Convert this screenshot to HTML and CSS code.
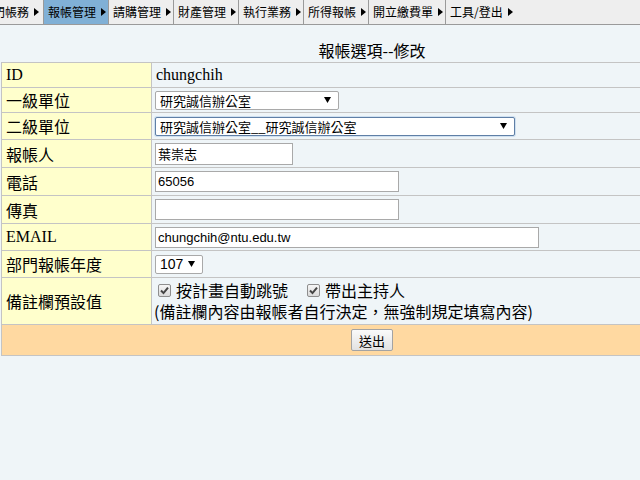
FILE: index.html
```html
<!DOCTYPE html>
<html lang="zh-Hant">
<head>
<meta charset="utf-8">
<title>報帳選項--修改</title>
<link rel="stylesheet" href="styles.css">
</head>
<body>
<nav class="menu">
  <div class="menu-item first">部門帳務<span class="tri"></span></div>
  <div class="menu-item active">報帳管理<span class="tri"></span></div>
  <div class="menu-item">請購管理<span class="tri"></span></div>
  <div class="menu-item">財產管理<span class="tri"></span></div>
  <div class="menu-item">執行業務<span class="tri"></span></div>
  <div class="menu-item">所得報帳<span class="tri"></span></div>
  <div class="menu-item">開立繳費單<span class="tri"></span></div>
  <div class="menu-item last">工具/登出<span class="tri"></span></div>
</nav>
<main class="page">
  <div class="title">報帳選項--修改</div>
  <table class="form">
    <tr class="h25"><th>ID</th><td class="plain">chungchih</td></tr>
    <tr class="h25"><th>一級單位</th><td><select class="sel sel-1"><option>研究誠信辦公室</option></select></td></tr>
    <tr class="h27"><th>二級單位</th><td><select class="sel sel-2"><option>研究誠信辦公室__研究誠信辦公室</option></select></td></tr>
    <tr class="h28"><th>報帳人</th><td><input class="txt w-name" value="葉崇志"></td></tr>
    <tr class="h28"><th>電話</th><td><input class="txt w-mid" value="65056"></td></tr>
    <tr class="h28"><th>傳真</th><td><input class="txt w-mid" value=""></td></tr>
    <tr class="h27"><th>EMAIL</th><td><input class="txt w-long" value="chungchih@ntu.edu.tw"></td></tr>
    <tr class="h27"><th>部門報帳年度</th><td><select class="sel sel-year"><option>107</option></select></td></tr>
    <tr class="h47"><th>備註欄預設值</th><td class="notes">
      <div class="checks">
        <label class="chk"><span class="box"><svg viewBox="0 0 13 13" width="13" height="13"><path d="M3 6.5l2.5 2.6L10 3.6" fill="none" stroke="#444" stroke-width="2"/></svg></span>按計畫自動跳號</label>
        <label class="chk"><span class="box"><svg viewBox="0 0 13 13" width="13" height="13"><path d="M3 6.5l2.5 2.6L10 3.6" fill="none" stroke="#444" stroke-width="2"/></svg></span>帶出主持人</label>
      </div>
      <div class="hint">(備註欄內容由報帳者自行決定，無強制規定填寫內容)</div>
    </td></tr>
    <tr class="h31 submit-row"><td colspan="2"><button class="btn">送出</button></td></tr>
  </table>
</main>
</body>
</html>
```

FILE: styles.css
```css
html, body {
  margin: 0;
  padding: 0;
  overflow: hidden;
  background: #eff5f8;
  color: #000;
  font-family: "Liberation Serif", "Noto Sans CJK TC", serif;
}

.menu {
  display: flex;
  height: 24px;
  background: #eeeeee;
  border-bottom: 1px solid #9a9a9a;
  font-family: "Noto Sans CJK TC", sans-serif;
  font-size: 12px;
  line-height: 24px;
  white-space: nowrap;
}

.menu-item {
  display: flex;
  align-items: center;
  padding: 0 2px 0 4px;
  border-right: 1px solid #9a9a9a;
  flex: none;
}

.menu-item.first {
  margin-left: -23px;
  padding-right: 4px;
}

.menu-item.active {
  background: #80b0d6;
}

.menu-item.last {
  border-right: none;
}

.tri {
  display: inline-block;
  width: 0;
  height: 0;
  margin-left: 5px;
  border-left: 5px solid #000;
  border-top: 4px solid transparent;
  border-bottom: 4px solid transparent;
}

.page {
  width: 742px;
  margin-left: 1px;
}

.title {
  text-align: center;
  font-family: "Noto Sans CJK TC", sans-serif;
  font-size: 16px;
  line-height: 20px;
  padding-top: 15px;
  height: 22px;
}

.form {
  width: 742px;
  border-collapse: collapse;
  font-size: 16px;
}

.form th,
.form td {
  border: 1px solid #c4c4c4;
  padding: 0 0 0 3px;
  vertical-align: middle;
  text-align: left;
}

.form th {
  width: 145px;
  font-weight: normal;
  background: #ffffcc;
  padding-left: 4px;
}

.form td.plain {
  padding-left: 4px;
}

.h25 { height: 25px; }
.h27 { height: 27px; }
.h28 { height: 28px; }
.h31 { height: 31px; }
.h47 { height: 47px; }

.sel {
  appearance: none;
  -webkit-appearance: none;
  display: block;
  box-sizing: border-box;
  height: 19px;
  margin: 0;
  padding: 0 0 0 4px;
  font-family: "Noto Sans CJK TC", sans-serif;
  font-size: 13px;
  line-height: 17px;
  color: #000;
  background: #fff url("data:image/svg+xml,%3Csvg xmlns='http://www.w3.org/2000/svg' width='7' height='6'%3E%3Cpath d='M0 0h7L3.5 6z' fill='%23000'/%3E%3C/svg%3E") no-repeat right 7px center;
  border: 1px solid #a9a9a9;
  border-radius: 2px;
}

.sel-1 { width: 184px; }
.sel-2 { width: 360px; border-color: #5f7fa6; box-shadow: 0 0 0 1px #cfe0f0; }
.sel-year {
  width: 48px;
  font-family: "Liberation Sans", Arial, sans-serif;
  font-size: 14px;
}

.txt {
  display: block;
  box-sizing: border-box;
  height: 21px;
  margin: 0;
  padding: 0 0 0 2px;
  font-family: "Liberation Sans", "Noto Sans CJK TC", sans-serif;
  font-size: 13px;
  color: #000;
  background: #fff;
  border: 1px solid #a9a9a9;
  border-radius: 0;
}

.w-name { width: 138px; height: 22px; }
.w-mid { width: 244px; }
.w-long { width: 384px; }

.notes {
  font-family: "Noto Sans CJK TC", sans-serif;
  line-height: 21px;
}

.checks {
  display: flex;
  gap: 19px;
  padding-left: 3px;
}

.chk {
  display: flex;
  align-items: center;
  gap: 5px;
}

.box {
  display: inline-block;
  box-sizing: border-box;
  width: 13px;
  height: 13px;
  border: 1px solid #8e8e8e;
  border-radius: 2px;
  background: linear-gradient(#f6f6f6, #dadada);
  line-height: 0;
}

.box svg {
  margin: -1px 0 0 -1px;
}

.hint {
  margin-left: -1px;
}

.submit-row td {
  background: #ffd9a1;
  text-align: center;
  padding: 0;
}

.btn {
  width: 42px;
  height: 22px;
  padding: 0;
  font-family: "Noto Sans CJK TC", sans-serif;
  font-size: 13px;
  color: #000;
  background: linear-gradient(#fafafa, #e2e2e2);
  border: 1px solid #a3a3a3;
  border-radius: 2px;
}
```
